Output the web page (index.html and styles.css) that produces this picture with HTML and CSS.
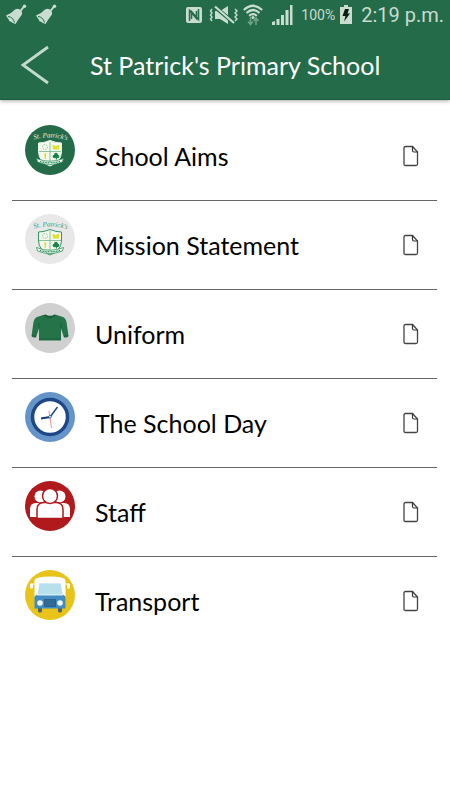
FILE: index.html
```html
<!DOCTYPE html>
<html lang="en">
<head>
<meta charset="utf-8">
<meta name="viewport" content="width=device-width, initial-scale=1">
<title>St Patrick's Primary School</title>
<link rel="stylesheet" href="styles.css">
</head>
<body>
<svg class="defs" aria-hidden="true">
  <defs>
    <symbol id="bell" viewBox="0 0 22 22">
      <path d="M14 7.500 18 2.500" stroke="currentColor" stroke-width="2"/>
      <circle cx="18.500" cy="2.300" r="1.700" fill="currentColor"/>
      <path d="M9 5.500Q12.500 3.500 15 6.500Q17.500 9.500 14.500 12.500Q12.500 15 9.500 20Q4 19 0 11.500Q6 9 9 5.500Z" fill="currentColor"/>
      <path d="M2 12.500Q7 13 8.500 18.500" fill="none" stroke="#246b49" stroke-width="1"/>
      <circle cx="4.500" cy="16" r="1.500" fill="currentColor"/>
    </symbol>
    <symbol id="page" viewBox="0 0 16 22">
      <path d="M2.500 1.500H9.500L14.500 7V19Q14.500 20.500 13 20.500H2.500Q1 20.500 1 19V3Q1 1.500 2.500 1.500Z" fill="#fff" stroke="#444" stroke-width="1.300"/>
      <path d="M9.500 1.500V5.500Q9.500 7 11 7H14.500" fill="none" stroke="#333" stroke-width="1.200"/>
    </symbol>
    <symbol id="crest" viewBox="0 0 50 50">
      <path id="arc" d="M9 14.500Q25 9.500 46 16.500" fill="none"/>
      <text class="crest-text" fill="currentColor"><textPath href="#arc">St. Patrick's</textPath></text>
      <path d="M13.500 18Q19 18 25 15.500Q31 18 36.500 18V27Q36 37 25 41Q14 37 13.500 27Z" fill="#f4f8ec" stroke="currentColor" stroke-width="1"/>
      <path d="M25 17V38M14 26.500H36" stroke="#72b487" stroke-width="0.800"/>
      <circle cx="20" cy="22" r="2.500" fill="none" stroke="#8bc8a2" stroke-width="1" stroke-dasharray="1.500 1"/>
      <path d="M27.500 20H29.500V21H32V20H34V24.500H28Z" fill="#dbe52b"/>
      <path d="M19.300 28.500H21.200L20.800 34H19.800Z" fill="#e1d91e"/>
      <g fill="#148449"><circle cx="29.500" cy="31.500" r="1.800"/><circle cx="32.500" cy="31.500" r="1.800"/><circle cx="31" cy="29.500" r="1.800"/><path d="M30.700 31H31.600L32 34.500H30.800Z"/></g>
      <path d="M11.500 33.500Q25 39 38.500 33.500L37.500 37Q25 42 12.500 37Z" fill="#f0faef" stroke="#1d8551" stroke-width="0.700"/>
      <path d="M15 36.500Q25 39 35 36.500" fill="none" stroke="#1d8551" stroke-width="1.200" stroke-dasharray="1 0.600"/>
    </symbol>
  </defs>
</svg>
<header class="top">
  <div class="status">
    <div class="group bells">
      <svg class="bell"><use href="#bell"/></svg>
      <svg class="bell"><use href="#bell"/></svg>
    </div>
    <div class="group signals">
      <svg width="16" height="16" viewBox="0 0 16 16" aria-label="NFC"><rect width="16" height="16" rx="2" fill="currentColor"/><path d="M3.500 14V3.500L10.500 11.500V4M12.500 2V12.500L5.500 4.500V12" fill="none" stroke="#246b49" stroke-width="1.500"/></svg>
      <svg class="mute" width="30" height="20" viewBox="0 0 30 20" aria-label="Muted"><path d="M6 6H11L19 1V19L11 14H6Z" fill="currentColor"/><path d="M6 2 25 18" stroke="#246b49" stroke-width="4"/><path d="M6 1.500 25 18" stroke="currentColor" stroke-width="2.200"/><path d="M3 4 1.500 6 3 8 1.500 10 3 12 1.500 14 3 16M26 4 28 6 26 8 28 10 26 12 28 14 26 16" fill="none" stroke="currentColor" stroke-width="1.400"/></svg>
      <svg class="wifi" width="20" height="22" viewBox="0 0 20 22" aria-label="Wi-Fi"><path d="M0.800 6Q10-2.500 19.200 6M3.500 9Q10 3 16.500 9M6.200 11.800Q10 8.500 13.800 11.800" fill="none" stroke="currentColor" stroke-width="2.200"/><circle cx="10" cy="13.500" r="1.500" fill="currentColor"/><path d="M7.500 13V20M5 17.500 7.500 20.500 10 17.500M13 21V14.500M10.500 17 13 14 15.500 17" fill="none" stroke="#70a287" stroke-width="1.600"/></svg>
      <svg class="bars" width="21" height="20" viewBox="0 0 21 20" aria-label="Signal"><path d="M0 20V17L3 16V20ZM4.500 20V14H7.500V20ZM9 20V10H12V20ZM13.500 20V5H16.500V20ZM18 20V0H20.500V20Z" fill="currentColor"/></svg>
      <span class="charge">100%</span>
      <svg class="battery" width="12" height="19" viewBox="0 0 12 19" aria-label="Charging"><path d="M0 2H4V0H8V2H12V19H0Z" fill="currentColor"/><path d="M5 4H9L7.500 8.500H10L4 16.500 5.500 11H2.500Z" fill="#071d12"/></svg>
      <time class="clock">2:19 p.m.</time>
    </div>
  </div>
  <div class="titlebar">
    <button class="back" type="button" aria-label="Back"><svg width="30" height="40" viewBox="0 0 30 40"><path d="M28 2 3 20 28 38" fill="none" stroke="#c4dbcc" stroke-width="2.800"/></svg></button>
    <h1>St Patrick's Primary School</h1>
  </div>
</header>
<main>
  <ul class="list">
    <li><a class="row" href="#aims">
      <svg class="badge crest-light" viewBox="0 0 50 50"><circle cx="25" cy="25" r="25" fill="#246b49"/><use href="#crest"/></svg>
      <span class="label">School Aims</span><svg class="page"><use href="#page"/></svg></a></li>
    <li><a class="row" href="#mission">
      <svg class="badge crest-green" viewBox="0 0 50 50"><circle cx="25" cy="25" r="25" fill="#e8e8e8"/><use href="#crest"/></svg>
      <span class="label">Mission Statement</span><svg class="page"><use href="#page"/></svg></a></li>
    <li><a class="row" href="#uniform">
      <svg class="badge" viewBox="0 0 50 50"><circle cx="25" cy="25" r="25" fill="#d0d0d0"/><path d="M20 11.500Q25 14 30 11.500L38 14Q40.500 15 41.500 19L43.500 33Q43.500 34.500 39 34.500L36 25.500V37.500H14V25.500L11 34.500Q7 34.500 6.500 33L8.500 19Q9.500 15 12 14Z" fill="#247349"/><path d="M20 12Q25 16.500 30 12" fill="none" stroke="#14542f" stroke-width="1.200"/><path d="M14 25V20M36 25V20M14 36H36M7 32.500 11 33.500M43 32.500 39 33.500" stroke="#175b36" stroke-width="0.800"/></svg>
      <span class="label">Uniform</span><svg class="page"><use href="#page"/></svg></a></li>
    <li><a class="row" href="#day">
      <svg class="badge" viewBox="0 0 50 50"><circle cx="25" cy="25" r="25" fill="#6594ca"/><circle cx="25" cy="25" r="17.500" fill="#fff" stroke="#1d4785" stroke-width="3.500"/><path d="M24 19 26.500 36" stroke="#f49ca4" stroke-width="1.200"/><path d="M25.500 24.500 32.500 15" stroke="#234c86" stroke-width="1.500"/><path d="M25 25 16 26.500" stroke="#153c78" stroke-width="2.200"/><circle cx="25" cy="24.800" r="1.300" fill="#fff" stroke="#234c86" stroke-width="0.800"/></svg>
      <span class="label">The School Day</span><svg class="page"><use href="#page"/></svg></a></li>
    <li><a class="row" href="#staff">
      <svg class="badge" viewBox="0 0 50 50"><circle cx="25" cy="25" r="25" fill="#b01a1d"/><g fill="#fff"><circle cx="15.500" cy="15.500" r="6"/><circle cx="34.500" cy="15.500" r="6"/><path d="M5 36V28Q5 22 11 22H39Q45 22 45 28V36Z"/></g><g fill="#fff" stroke="#b01a1d" stroke-width="1.500"><path d="M12 37.500V28.500Q12 21.500 19 21.500H31Q38 21.500 38 28.500V37.500Z"/><circle cx="25" cy="15" r="7.500"/></g></svg>
      <span class="label">Staff</span><svg class="page"><use href="#page"/></svg></a></li>
    <li><a class="row" href="#transport">
      <svg class="badge" viewBox="0 0 50 50"><circle cx="25" cy="25" r="25" fill="#e8c41b"/><path d="M13 37H17V41Q17 42.500 15 42.500T13 41ZM33 37H37V41Q37 42.500 35 42.500T33 41Z" fill="#52606a"/><path d="M9.500 10Q10.500 6.500 25 6.500T40.500 10V28H9.500Z" fill="#fff"/><path d="M9.500 14H6V18M40.500 14H44V18" fill="none" stroke="#fff" stroke-width="1"/><rect x="5" y="13.500" width="3" height="5" rx="1" fill="#fff"/><rect x="42" y="13.500" width="3" height="5" rx="1" fill="#fff"/><path d="M9.500 26.500 12 24.500H38L40.500 26.500V38.500H9.500Z" fill="#438cc2"/><path d="M14 13H36L38 25H12Z" fill="#b6e0ec" stroke="#fff" stroke-width="0.800"/><rect x="19" y="29" width="12" height="8" rx="1" fill="#28618d"/><path d="M20 31H30M20 33H30M20 35H30" stroke="#477da4" stroke-width="0.700"/><circle cx="15" cy="33" r="2.800" fill="#f2f7fa"/><circle cx="35" cy="33" r="2.800" fill="#f2f7fa"/></svg>
      <span class="label">Transport</span><svg class="page"><use href="#page"/></svg></a></li>
  </ul>
</main>
</body>
</html>
```
FILE: styles.css
```css
* { box-sizing: border-box; }
body {
  margin: 0;
  background: #fff;
  color: #000;
  font-family: Lato, "Liberation Sans", sans-serif;
}
.defs { position: absolute; width: 0; height: 0; }
.top {
  background: #246b49;
  border-bottom: 1px solid #1b5c3b;
  box-shadow: 0 1px 4px rgba(0, 0, 0, 0.35);
  color: #fff;
}
.status {
  display: flex;
  justify-content: space-between;
  align-items: center;
  height: 29px;
  padding: 0 6px;
  color: #c8dccf;
  font-family: Roboto, "Liberation Sans", sans-serif;
}
.group { display: flex; align-items: center; }
.group svg { flex: none; }
.bells { gap: 8px; }
.bell { width: 22px; height: 22px; }
.mute { margin-left: 7px; }
.wifi { margin-left: 4px; }
.bars { margin-left: 9px; }
.charge { margin-left: 8px; font-size: 14px; }
.battery { margin-left: 5px; }
.clock { margin-left: 9px; font-size: 20px; white-space: nowrap; }
.titlebar {
  display: flex;
  align-items: center;
  height: 70px;
  padding: 2px 20px 0;
}
.back {
  display: flex;
  width: 30px;
  padding: 0;
  border: 0;
  background: none;
}
h1 {
  flex: 1;
  margin: 0 0 0 40px;
  font-size: 25px;
  font-weight: 400;
  line-height: 32px;
  white-space: nowrap;
}
.list {
  margin: 0;
  padding: 12px 13px 0 12px;
  list-style: none;
}
.list li + li { border-top: 1px solid #666; }
.row {
  display: flex;
  align-items: flex-start;
  height: 88px;
  padding: 13px 18px 0 13px;
  color: inherit;
  text-decoration: none;
}
.badge { flex: none; width: 50px; height: 50px; }
.crest-light { color: #e8f5eb; }
.crest-green { color: #359564; }
.crest-text { font: italic 7px "Liberation Serif", serif; }
.label {
  flex: 1;
  margin: 15px 0 0 20px;
  font-size: 25px;
  line-height: 32px;
}
.page { flex: none; width: 16px; height: 22px; margin-top: 20px; }
```
